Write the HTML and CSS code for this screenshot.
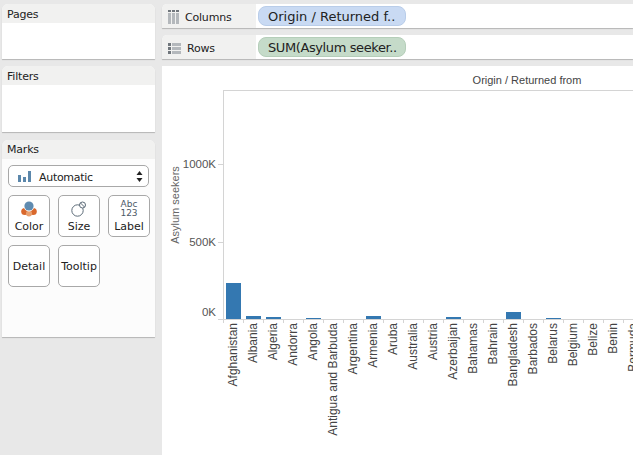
FILE: index.html
```html
<!DOCTYPE html>
<html>
<head>
  <meta charset="UTF-8">
  <title>Asylum seekers</title>
  <link rel="stylesheet" href="styles.css">
</head>
<body>
  <div class="sidebar">
    <div class="card pages">
      <div class="card-title">Pages</div>
    </div>
    <div class="card filters">
      <div class="card-title">Filters</div>
    </div>
    <div class="card marks">
      <div class="card-title">Marks</div>
      <div class="marks-body">
        <div class="mark-select">
          <svg class="bars-icon" width="14" height="13" viewBox="0 0 14 13">
            <rect x="0" y="5" width="3" height="7" fill="#5b87ab"/>
            <rect x="5" y="7" width="3" height="5" fill="#5b87ab"/>
            <rect x="10" y="1" width="3" height="11" fill="#5b87ab"/>
          </svg>
          <span class="mark-select-text">Automatic</span>
          <svg class="updown" width="7" height="13" viewBox="0 0 7 13">
            <path d="M3.5 1 L6.5 5 L0.5 5 Z" fill="#222"/>
            <path d="M3.5 12 L6.5 8 L0.5 8 Z" fill="#222"/>
          </svg>
        </div>
        <div class="mark-grid">
          <div class="mark-btn">
            <svg width="16" height="16" viewBox="0 0 16 16">
              <circle cx="3.8" cy="10.5" r="3.6" fill="#d9682c"/>
              <circle cx="12.2" cy="10.5" r="3.6" fill="#d9682c"/>
              <circle cx="8" cy="12.5" r="3" fill="#e9a06f"/>
              <circle cx="8" cy="5" r="5.4" fill="#fff"/>
              <circle cx="8" cy="5" r="4.6" fill="#5f8bb0"/>
            </svg>
            <span>Color</span>
          </div>
          <div class="mark-btn">
            <svg width="16" height="16" viewBox="0 0 16 16">
              <circle cx="6.5" cy="9.5" r="5.7" fill="#fff" stroke="#5c6b78"/>
              <circle cx="11.5" cy="4" r="3" fill="#fff" stroke="#5c6b78"/>
              <path d="M9.5 2 L13.5 6" stroke="#5c6b78"/>
            </svg>
            <span>Size</span>
          </div>
          <div class="mark-btn">
            <div class="abc">Abc<br>123</div>
            <span>Label</span>
          </div>
          <div class="mark-btn plain"><span>Detail</span></div>
          <div class="mark-btn plain"><span>Tooltip</span></div>
        </div>
      </div>
    </div>
  </div>

  <div class="main">
    <div class="shelf">
      <div class="shelf-name">
        <svg width="11" height="14" viewBox="0 0 11 14">
          <rect x="0" y="0" width="3" height="2" fill="#70767c"/>
          <rect x="4" y="0" width="3" height="2" fill="#70767c"/>
          <rect x="8" y="0" width="3" height="2" fill="#70767c"/>
          <rect x="0" y="3" width="3" height="11" fill="#b4b8bc"/>
          <rect x="4" y="3" width="3" height="11" fill="#b4b8bc"/>
          <rect x="8" y="3" width="3" height="11" fill="#b4b8bc"/>
        </svg>
        <span>Columns</span>
      </div>
      <div class="pill blue">Origin / Returned f..</div>
    </div>
    <div class="shelf">
      <div class="shelf-name">
        <svg width="13" height="11" viewBox="0 0 13 11">
          <rect x="0" y="0" width="3" height="3" fill="#70767c"/>
          <rect x="0" y="4" width="3" height="3" fill="#70767c"/>
          <rect x="0" y="8" width="3" height="3" fill="#70767c"/>
          <rect x="4" y="0" width="9" height="3" fill="#b4b8bc"/>
          <rect x="4" y="4" width="9" height="3" fill="#b4b8bc"/>
          <rect x="4" y="8" width="9" height="3" fill="#b4b8bc"/>
        </svg>
        <span>Rows</span>
      </div>
      <div class="pill green">SUM(Asylum seeker..</div>
    </div>

    <div class="view">
      <svg class="chart" width="471" height="389" viewBox="162 66 471 389">
        <text class="col-title" x="527" y="84">Origin / Returned from</text>

        <path class="grid-line" d="M223.5 90 V323 M223 90.5 H633 M218 319.5 H633 M218 164.5 H223 M218 242.5 H223"/>
        <path class="grid-line" d="M243.5 319 V323 M263.5 319 V323 M283.5 319 V323 M303.5 319 V323 M323.5 319 V323 M343.5 319 V323 M363.5 319 V323 M383.5 319 V323 M403.5 319 V323 M423.5 319 V323 M443.5 319 V323 M463.5 319 V323 M483.5 319 V323 M503.5 319 V323 M523.5 319 V323 M543.5 319 V323 M563.5 319 V323 M583.5 319 V323 M603.5 319 V323 M623.5 319 V323"/>

        <text class="axis-title" transform="translate(179 205) rotate(-90)">Asylum seekers</text>
        <text class="tick" x="216" y="168">1000K</text>
        <text class="tick" x="216" y="246">500K</text>
        <text class="tick" x="216" y="316">0K</text>

        <g class="bars">
          <rect x="226" y="283" width="15" height="36"/>
          <rect x="246" y="316" width="15" height="3"/>
          <rect x="266" y="317" width="15" height="2"/>
          <rect x="306" y="318" width="15" height="1"/>
          <rect x="366" y="316" width="15" height="3"/>
          <rect x="446" y="317" width="15" height="2"/>
          <rect x="506" y="312" width="15" height="7"/>
          <rect x="546" y="318" width="15" height="1"/>
        </g>

        <g class="names">
          <text transform="translate(237 323) rotate(-90)">Afghanistan</text>
          <text transform="translate(257 323) rotate(-90)">Albania</text>
          <text transform="translate(277 323) rotate(-90)">Algeria</text>
          <text transform="translate(297 323) rotate(-90)">Andorra</text>
          <text transform="translate(317 323) rotate(-90)">Angola</text>
          <text transform="translate(337 323) rotate(-90)">Antigua and Barbuda</text>
          <text transform="translate(357 323) rotate(-90)">Argentina</text>
          <text transform="translate(377 323) rotate(-90)">Armenia</text>
          <text transform="translate(397 323) rotate(-90)">Aruba</text>
          <text transform="translate(417 323) rotate(-90)">Australia</text>
          <text transform="translate(437 323) rotate(-90)">Austria</text>
          <text transform="translate(457 323) rotate(-90)">Azerbaijan</text>
          <text transform="translate(477 323) rotate(-90)">Bahamas</text>
          <text transform="translate(497 323) rotate(-90)">Bahrain</text>
          <text transform="translate(517 323) rotate(-90)">Bangladesh</text>
          <text transform="translate(537 323) rotate(-90)">Barbados</text>
          <text transform="translate(557 323) rotate(-90)">Belarus</text>
          <text transform="translate(577 323) rotate(-90)">Belgium</text>
          <text transform="translate(597 323) rotate(-90)">Belize</text>
          <text transform="translate(617 323) rotate(-90)">Benin</text>
          <text transform="translate(637 323) rotate(-90)">Bermuda</text>
        </g>
      </svg>
    </div>
  </div>
</body>
</html>
```

FILE: styles.css
```css
/* workbook layout */
html, body {
  height: 100%;
}

body {
  margin: 0;
  padding: 4px 0 0 2px;
  box-sizing: border-box;
  display: flex;
  gap: 7px;
  overflow: hidden;
  background-color: #e8e8e8;
  color: #222;
  font-family: "DejaVu Sans", sans-serif;
  font-size: 11px;
}

.sidebar {
  width: 153px;
  flex-shrink: 0;
  display: flex;
  flex-direction: column;
  gap: 7px;
}

.card {
  background-color: #fff;
  border-radius: 6px 6px 0 0;
  box-shadow: 0 1px 1px #b5b5b5;
}

.card-title {
  height: 19px;
  line-height: 21px;
  padding-left: 5px;
  letter-spacing: -0.2px;
  background-color: #f1f1f0;
  border-radius: 6px 6px 0 0;
}

.pages { height: 55px; }
.filters { height: 66px; }
.marks {
  height: 197px;
  margin-top: 1px;
  background-color: #fcfcfc;
}

.marks .card-title {
  line-height: 19px;
}

.marks-body {
  padding: 6px 6px 0 6px;
}

.mark-select {
  height: 20px;
  display: flex;
  align-items: center;
  padding: 0 5px 0 9px;
  background-color: #fff;
  border: 1px solid #a8a8a8;
  border-radius: 5px;
}

.mark-select-text {
  flex: 1;
  margin-left: 7px;
  padding-top: 2px;
  letter-spacing: -0.3px;
}

.mark-grid {
  display: grid;
  grid-template-columns: repeat(3, 42px);
  grid-auto-rows: 42px;
  gap: 8px;
  margin-top: 8px;
}

.mark-btn {
  box-sizing: border-box;
  display: flex;
  flex-direction: column;
  align-items: center;
  justify-content: flex-end;
  padding-bottom: 3px;
  background-color: #fff;
  border: 1px solid #a8a8a8;
  border-radius: 5px;
  white-space: nowrap;
}

.mark-btn svg {
  margin-bottom: 3px;
}

.mark-btn.plain {
  justify-content: center;
  padding-bottom: 0;
}

.abc {
  font-size: 9px;
  line-height: 9px;
  color: #4c5a68;
  text-align: center;
  margin-bottom: 2px;
}

.main {
  flex: 1;
  min-width: 0;
  display: flex;
  flex-direction: column;
  gap: 7px;
}

.shelf {
  height: 24px;
  flex-shrink: 0;
  display: flex;
  align-items: center;
  background-color: #fff;
  border-radius: 5px 0 0 0;
  box-shadow: 0 1px 1px #b5b5b5;
}

.shelf-name {
  width: 94px;
  height: 100%;
  flex-shrink: 0;
  display: flex;
  align-items: center;
  gap: 6px;
  padding: 2px 0 0 6px;
  box-sizing: border-box;
  letter-spacing: -0.2px;
  background-color: #f1f1f0;
  border-radius: 5px 0 0 0;
}

.pill {
  width: 148px;
  height: 20px;
  margin-left: 2px;
  padding-left: 9px;
  box-sizing: border-box;
  line-height: 19px;
  border-radius: 8px;
  font-size: 13px;
  white-space: nowrap;
  overflow: hidden;
}

.pill.blue { background-color: #c9daf3; border: 1px solid #b9cde9; }
.pill.green {
  background-color: #c5dbc9;
  border: 1px solid #b5ceb9;
  letter-spacing: -0.4px;
}

.view {
  flex: 1;
  background-color: #fff;
  overflow: hidden;
}

.chart {
  display: block;
  font-family: "Liberation Sans", sans-serif;
}

.grid-line {
  fill: none;
  stroke: #d4d4d4;
  stroke-width: 1;
}

.col-title {
  font-size: 11px;
  fill: #444;
  text-anchor: middle;
}

.axis-title {
  font-size: 11px;
  fill: #666;
  text-anchor: middle;
}

.tick {
  font-size: 11.5px;
  fill: #555;
  text-anchor: end;
}

.bars rect {
  fill: #3478b1;
}

.names text {
  font-size: 12px;
  fill: #444;
  text-anchor: end;
}
```
